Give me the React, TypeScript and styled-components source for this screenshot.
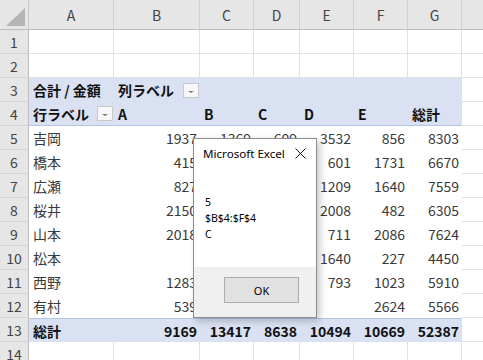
import React from 'react';
import styled, { createGlobalStyle, css } from 'styled-components';

const Global = createGlobalStyle`
  html, body { margin: 0; padding: 0; background: #ffffff; overflow: hidden; }
  #root { width: 483px; height: 360px; }
`;

const Sheet = styled.div`
  position: relative;
  width: 483px;
  height: 360px;
  overflow: hidden;
  display: grid;
  grid-template-columns: 29px 85px 86px 54px 46px 54px 54px 54px 40px;
  grid-template-rows: 30px repeat(14, 24px);
  font-family: "Noto Sans CJK JP", "Noto Sans", sans-serif;
  font-size: 14px;
  color: #3a3a3a;
`;

const Corner = styled.div`
  position: relative;
  background: #e6e6e6;
  border-right: 1px solid #c8c8c8;
  border-bottom: 1px solid #bdbdbd;
  box-sizing: border-box;
`;

const CornerTriangle = styled.span`
  position: absolute;
  right: 3px;
  bottom: 3px;
  width: 19px;
  height: 18px;
  background: #b5b5b5;
  clip-path: polygon(100% 0, 100% 100%, 0 100%);
`;

const ColHead = styled.div`
  background: #e6e6e6;
  border-right: 1px solid #d0d0d0;
  border-bottom: 1px solid #bdbdbd;
  box-sizing: border-box;
  display: flex;
  align-items: center;
  justify-content: center;
  color: #444;
  font-size: 14px;
`;

const RowHead = styled.div`
  background: #e6e6e6;
  border-right: 1px solid #bdbdbd;
  border-bottom: 1px solid #d4d4d4;
  box-sizing: border-box;
  display: flex;
  align-items: center;
  justify-content: center;
  color: #444;
  font-size: 14px;
`;

type Kind = 'plain' | 'band' | 'bandEdge' | 'data' | 'total';

const Cell = styled.div<{ $kind: Kind; $align?: 'left' | 'right'; $bold?: boolean }>`
  box-sizing: border-box;
  display: flex;
  align-items: center;
  justify-content: ${(p) => (p.$align === 'right' ? 'flex-end' : 'space-between')};
  padding: 0 3px 0 3px;
  white-space: nowrap;
  font-weight: ${(p) => (p.$bold ? 700 : 400)};
  color: ${(p) => (p.$bold ? '#111' : '#3a3a3a')};
  ${(p) =>
    p.$kind === 'plain' &&
    css`
      border-right: 1px solid #e1e1e1;
      border-bottom: 1px solid #e1e1e1;
    `}
  ${(p) =>
    p.$kind === 'band' &&
    css`
      background: #d9e1f2;
    `}
  ${(p) =>
    p.$kind === 'bandEdge' &&
    css`
      background: #d9e1f2;
      border-bottom: 1px solid #b4c6e7;
    `}
  ${(p) =>
    p.$kind === 'total' &&
    css`
      background: #d9e1f2;
      border-top: 1px solid #b4c6e7;
    `}
`;

const Label = styled.span`
  padding-left: 1px;
`;

const FilterButton = styled.span`
  width: 16px;
  height: 15px;
  box-sizing: border-box;
  margin-right: -2px;
  border: 1px solid #c9c9c9;
  background: #f7f7f7;
  display: flex;
  align-items: center;
  justify-content: center;
  &::after {
    content: '';
    width: 0;
    height: 0;
    margin-top: 3px;
    border-left: 3px solid transparent;
    border-right: 3px solid transparent;
    border-top: 2px solid #777;
  }
`;

const Dialog = styled.div`
  position: absolute;
  left: 193px;
  top: 138px;
  width: 124px;
  height: 180px;
  box-sizing: border-box;
  border: 1px solid #8c8c8c;
  background: #ffffff;
  box-shadow: 3px 3px 7px rgba(0, 0, 0, 0.22);
  display: flex;
  flex-direction: column;
  font-family: "Noto Sans", "Liberation Sans", sans-serif;
  color: #000;
`;

const TitleBar = styled.div`
  height: 29px;
  display: flex;
  align-items: center;
  justify-content: space-between;
  padding: 0 10px 0 9px;
  font-size: 11.6px;
`;

const Message = styled.div`
  flex: 1;
  padding: 26px 0 0 11px;
  font-size: 10.5px;
  line-height: 16px;
`;

const Footer = styled.div`
  height: 50px;
  background: #f0f0f0;
  display: flex;
  justify-content: flex-end;
  align-items: flex-start;
  padding: 10px 17px 0 0;
  box-sizing: border-box;
`;

const OkButton = styled.div`
  width: 75px;
  height: 26px;
  box-sizing: border-box;
  border: 1px solid #adadad;
  background: #e1e1e1;
  display: flex;
  align-items: center;
  justify-content: center;
  font-size: 11px;
`;

const cols = ['A', 'B', 'C', 'D', 'E', 'F', 'G'];

// Values of columns C and D in rows 6-12 lie fully under the dialog, so they are left blank.
const data: [string, (number | null)[]][] = [
  ['吉岡', [1937, 1369, 609, 3532, 856, 8303]],
  ['橋本', [415, null, null, 601, 1731, 6670]],
  ['広瀬', [827, null, null, 1209, 1640, 7559]],
  ['桜井', [2150, null, null, 2008, 482, 6305]],
  ['山本', [2018, null, null, 711, 2086, 7624]],
  ['松本', [null, null, null, 1640, 227, 4450]],
  ['西野', [1283, null, null, 793, 1023, 5910]],
  ['有村', [539, null, null, null, 2624, 5566]],
];

const totals = [9169, 13417, 8638, 10494, 10669, 52387];

export default function App() {
  const rows: React.ReactNode[] = [];
  rows.push(
    <Corner key="corner">
      <CornerTriangle />
    </Corner>
  );
  cols.forEach((c) => rows.push(<ColHead key={'h' + c}>{c}</ColHead>));
  rows.push(<ColHead key="hH" />);

  const plainRow = (n: number) => {
    rows.push(<RowHead key={'r' + n}>{n}</RowHead>);
    for (let i = 0; i < 8; i++) rows.push(<Cell key={`c${n}-${i}`} $kind="plain" />);
  };

  plainRow(1);
  plainRow(2);

  rows.push(<RowHead key="r3">3</RowHead>);
  rows.push(
    <Cell key="c3-0" $kind="band" $bold>
      <Label>合計 / 金額</Label>
    </Cell>
  );
  rows.push(
    <Cell key="c3-1" $kind="band" $bold>
      <Label>列ラベル</Label>
      <FilterButton />
    </Cell>
  );
  for (let i = 2; i < 7; i++) rows.push(<Cell key={`c3-${i}`} $kind="band" />);
  rows.push(<Cell key="c3-7" $kind="plain" />);

  rows.push(<RowHead key="r4">4</RowHead>);
  rows.push(
    <Cell key="c4-0" $kind="bandEdge" $bold>
      <Label>行ラベル</Label>
      <FilterButton />
    </Cell>
  );
  ['A', 'B', 'C', 'D', 'E', '総計'].forEach((h, i) =>
    rows.push(
      <Cell key={`c4-${i + 1}`} $kind="bandEdge" $bold>
        <Label>{h}</Label>
      </Cell>
    )
  );
  rows.push(<Cell key="c4-7" $kind="plain" />);

  data.forEach(([name, vals], idx) => {
    const n = idx + 5;
    rows.push(<RowHead key={'r' + n}>{n}</RowHead>);
    rows.push(
      <Cell key={`c${n}-0`} $kind="data">
        <Label>{name}</Label>
      </Cell>
    );
    vals.forEach((v, i) =>
      rows.push(
        <Cell key={`c${n}-${i + 1}`} $kind="data" $align="right">
          {v ?? ''}
        </Cell>
      )
    );
    rows.push(<Cell key={`c${n}-7`} $kind="plain" />);
  });

  rows.push(<RowHead key="r13">13</RowHead>);
  rows.push(
    <Cell key="c13-0" $kind="total" $bold>
      <Label>総計</Label>
    </Cell>
  );
  totals.forEach((t, i) =>
    rows.push(
      <Cell key={`c13-${i + 1}`} $kind="total" $bold $align="right">
        {t}
      </Cell>
    )
  );
  rows.push(<Cell key="c13-7" $kind="plain" />);

  plainRow(14);

  return (
    <>
      <Global />
      <Sheet>
        {rows}
        <Dialog>
          <TitleBar>
            <span>Microsoft Excel</span>
            <svg width="11" height="11" viewBox="0 0 11 11">
              <path d="M0.5 0.5 L10.5 10.5 M10.5 0.5 L0.5 10.5" stroke="#111" strokeWidth="1" fill="none" />
            </svg>
          </TitleBar>
          <Message>
            5
            <br />
            $B$4:$F$4
            <br />C
          </Message>
          <Footer>
            <OkButton>OK</OkButton>
          </Footer>
        </Dialog>
      </Sheet>
    </>
  );
}
